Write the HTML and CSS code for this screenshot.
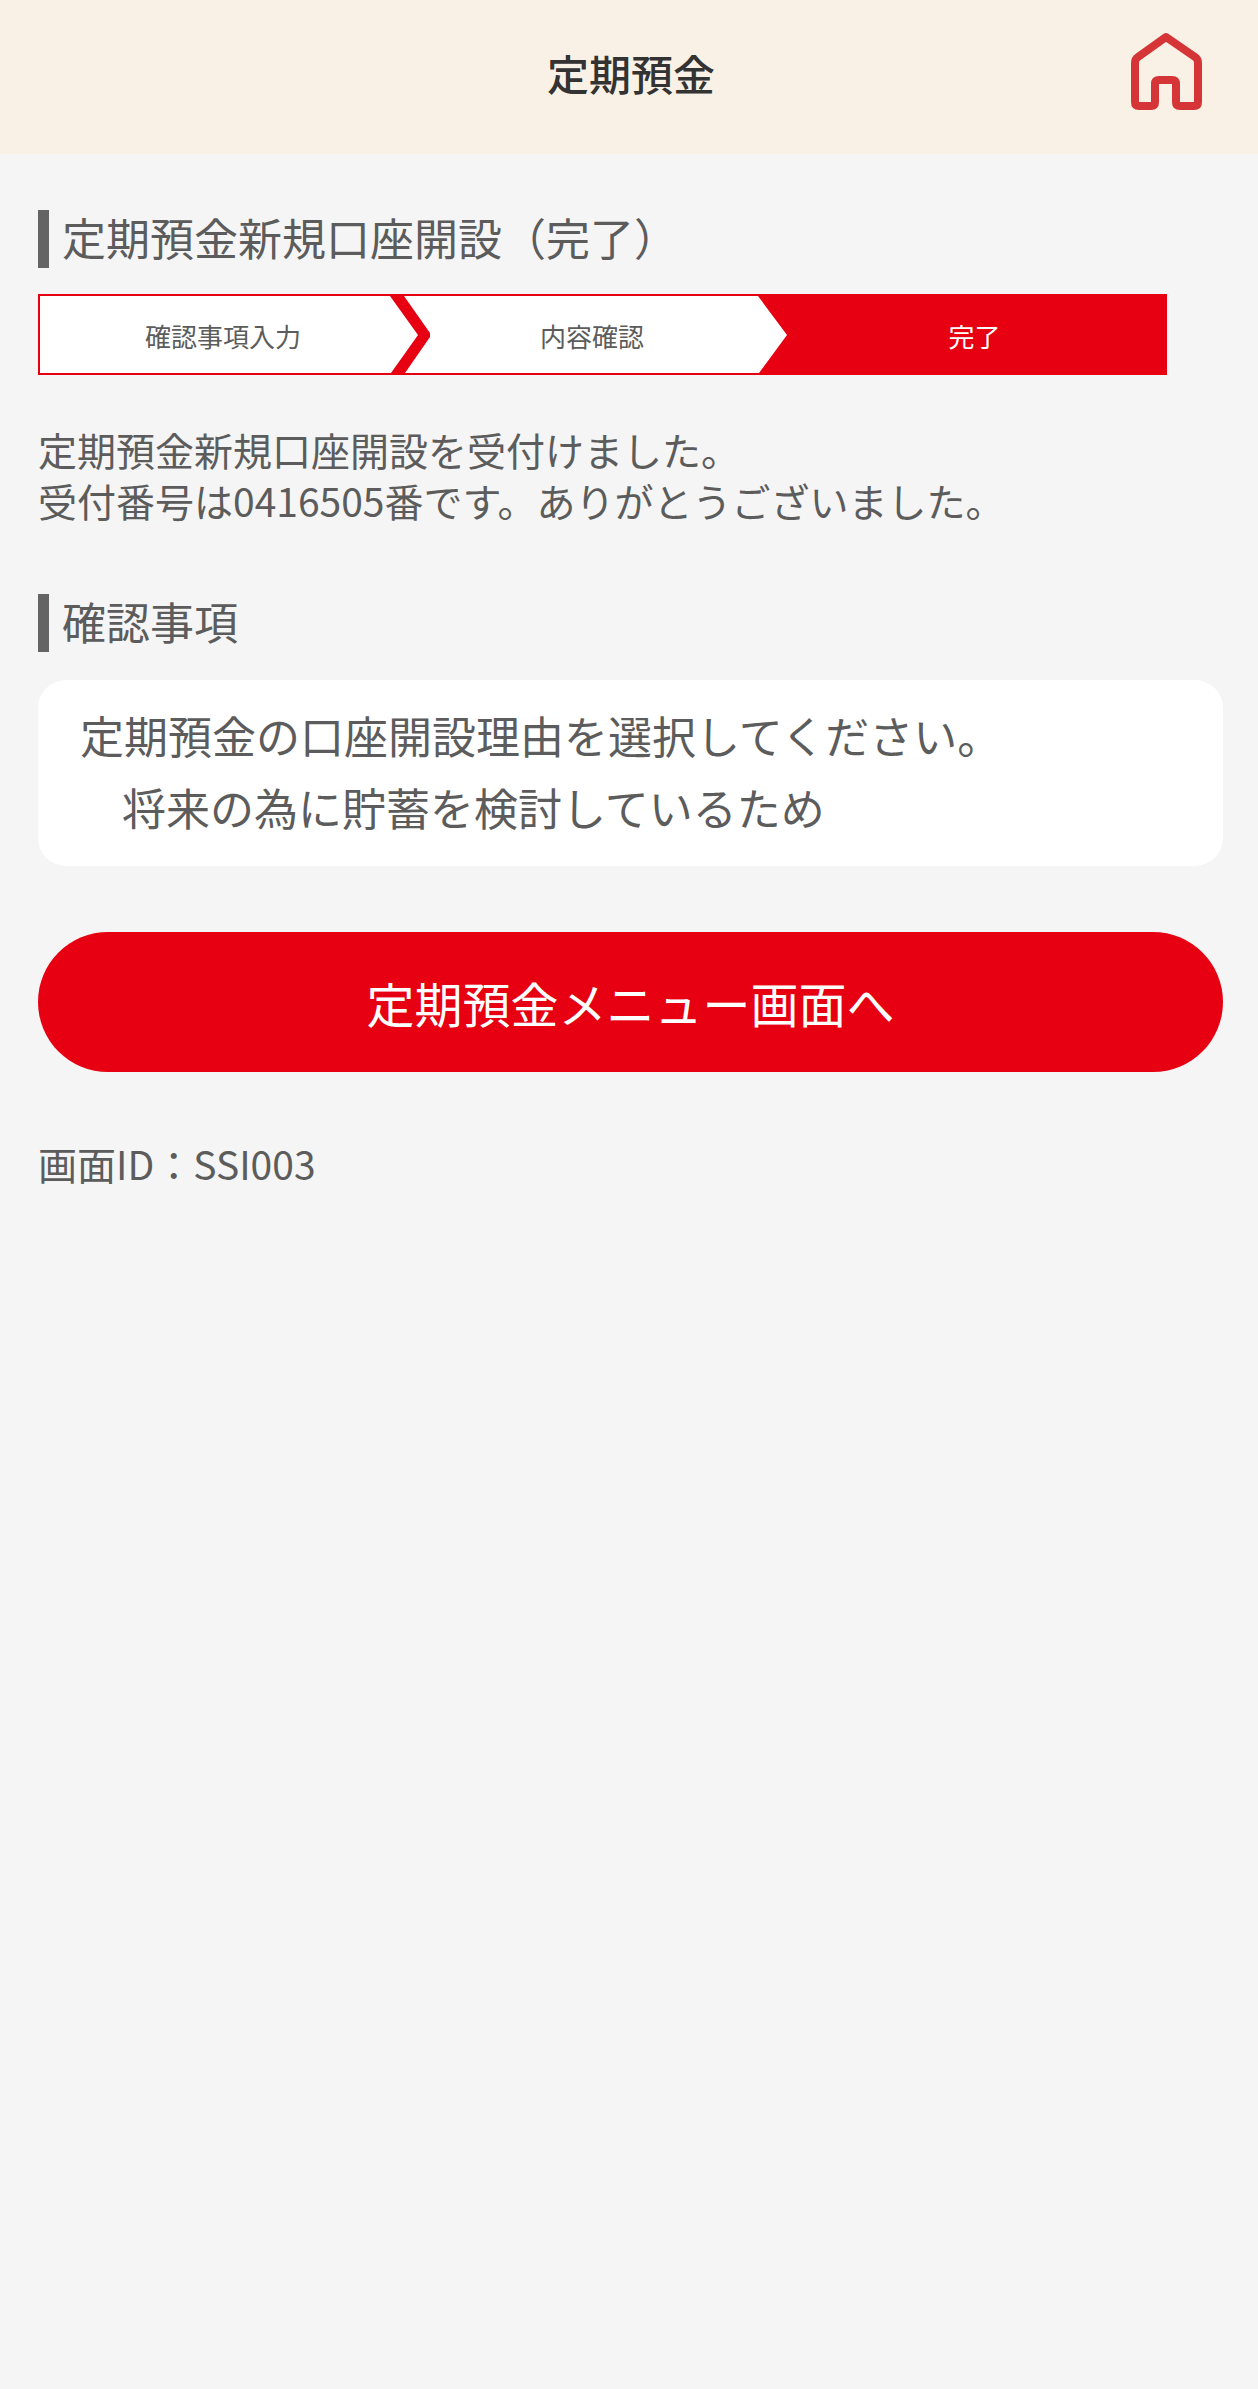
FILE: index.html
```html
<!DOCTYPE html>
<html lang="ja">
<head>
<meta charset="utf-8">
<meta name="viewport" content="width=device-width, initial-scale=1">
<title>定期預金</title>
<link rel="stylesheet" href="styles.css">
</head>
<body>
<header class="header">
  <h1 class="header-title">定期預金</h1>
  <a class="home" href="#" aria-label="ホーム">
    <svg class="home-icon" viewBox="0 0 72 80" aria-hidden="true">
      <path d="M36 6 L65 26 Q68 28 68 32 V71 Q68 75 64 75 H50 Q46 75 46 71 V53 Q46 49 42 49 H29 Q25 49 25 53 V71 Q25 75 21 75 H9 Q5 75 5 71 V32 Q5 28 8 26 Z"/>
    </svg>
  </a>
</header>
<main class="main">
  <h2 class="heading">定期預金新規口座開設（完了）</h2>
  <ol class="steps">
    <li class="step step-first">確認事項入力</li>
    <li class="arrow" aria-hidden="true"><svg viewBox="0 0 40 77" preserveAspectRatio="none"><path d="M0 0H14L40 37V41L15 77H1L28 39Z"/></svg></li>
    <li class="step">内容確認</li>
    <li class="arrow" aria-hidden="true"><svg viewBox="0 0 30 77" preserveAspectRatio="none"><path d="M0 0H30V77H1L29 39Z"/></svg></li>
    <li class="step step-current" aria-current="step">完了</li>
  </ol>
  <p class="message">定期預金新規口座開設を受付けました。<br>受付番号は0416505番です。ありがとうございました。</p>
  <h2 class="heading">確認事項</h2>
  <dl class="card">
    <dt>定期預金の口座開設理由を選択してください。</dt>
    <dd>将来の為に貯蓄を検討しているため</dd>
  </dl>
  <button class="menu-button" type="button">定期預金メニュー画面へ</button>
  <p class="screen-id">画面ID：SSI003</p>
</main>
</body>
</html>
```
FILE: styles.css
```css
* {
  box-sizing: border-box;
}

body {
  margin: 0;
  min-height: 100vh;
  background: #f5f5f5;
  color: #5c5c5c;
  font-family: "Noto Sans CJK JP", sans-serif;
  font-size: 39px;
  line-height: 51px;
}

h1,
h2,
p,
ol,
dl,
dd {
  margin: 0;
  padding: 0;
}

.header {
  display: grid;
  grid-template-columns: 1fr auto 1fr;
  align-items: center;
  height: 154px;
  padding: 0 56px 0 60px;
  background: #faf1e6;
}

.header-title {
  grid-column: 2;
  padding-bottom: 10px;
  color: #333;
  font-size: 42px;
  font-weight: 500;
}

.home {
  justify-self: end;
  padding-bottom: 12px;
}

.home-icon {
  display: block;
  width: 72px;
  height: 80px;
  fill: none;
  stroke: #d63537;
  stroke-width: 8px;
  stroke-linejoin: round;
}

.main {
  padding: 56px 35px 56px 38px;
}

.heading {
  padding: 0 0 4px 13px;
  border-left: 11px solid #646464;
  font-size: 44px;
  font-weight: 400;
  line-height: 54px;
}

.steps {
  display: grid;
  grid-template-columns: 350fr 40px 328fr 30px 377fr;
  margin: 26px 56px 49px 0;
  border: 2px solid #e60012;
  background: #fff;
  font-size: 26px;
  line-height: 75px;
  list-style: none;
  text-align: center;
}

.step {
  padding: 2px 4px 0 0;
}

.step-first {
  padding-left: 20px;
}

.step-current {
  background: #e60012;
  color: #fff;
}

.arrow svg {
  display: block;
  width: 100%;
  height: 77px;
  fill: #e60012;
}

.message {
  margin-bottom: 68px;
}

.card {
  margin: 28px 0 66px;
  padding: 19px 42px 23px;
  border-radius: 28px;
  background: #fff;
  font-size: 44px;
  line-height: 72px;
}

.card dd {
  padding-left: 42px;
}

.menu-button {
  display: block;
  width: 100%;
  height: 140px;
  margin-bottom: 66px;
  border: 0;
  border-radius: 70px;
  background: #e60012;
  color: #fff;
  font-family: inherit;
  font-size: 48px;
}
```
